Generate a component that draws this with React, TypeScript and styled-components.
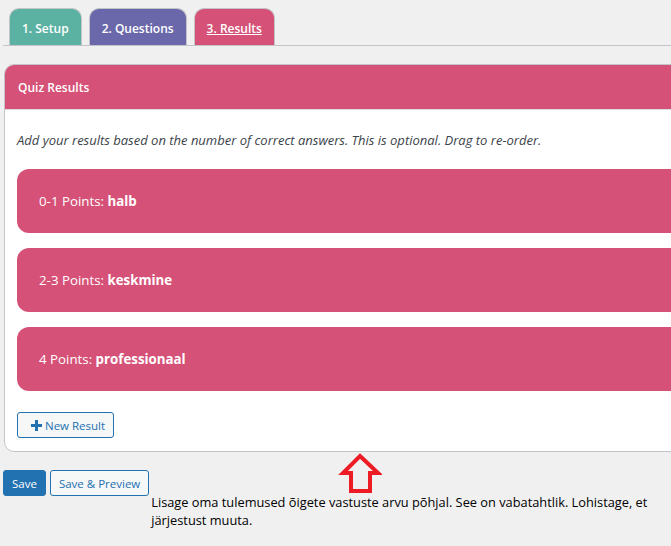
import React from "react";
import styled, { createGlobalStyle } from "styled-components";

const GlobalStyle = createGlobalStyle`
  html, body { margin: 0; padding: 0; background: #f0f0f1; overflow: hidden; }
  body { font-family: "Open Sans", "Noto Sans", sans-serif; font-size: 13px; color: #1d2327; }
  * { box-sizing: border-box; }
`;

const Page = styled.div`
  position: relative;
  width: 671px;
  height: 546px;
  padding: 8px 0 0 3px;
  overflow: hidden;
`;

const TabBar = styled.div`
  display: flex;
  gap: 7px;
  padding-left: 6px;
  border-bottom: 1px solid #c3c4c7;
  width: 740px;
`;

const Tab = styled.div<{ $bg: string; $active?: boolean }>`
  height: 37px;
  padding: 11px 12px 0;
  background: ${(p) => p.$bg};
  color: #fff;
  font-weight: 600;
  font-size: 12px;
  border: 1px solid #c3c4c7;
  border-bottom: none;
  border-radius: 10px 10px 0 0;
  text-decoration: ${(p) => (p.$active ? "underline" : "none")};
  white-space: nowrap;
`;

const Panel = styled.div`
  margin: 18px 0 0 1px;
  width: 740px;
  background: #fff;
  border: 1px solid #c3c4c7;
  border-radius: 10px;
  overflow: hidden;
`;

const PanelHeader = styled.div`
  height: 45px;
  background: #d65177;
  color: #fff;
  font-weight: 600;
  font-size: 12px;
  display: flex;
  align-items: center;
  padding: 0 13px;
  border-bottom: 1px solid #dcdcde;
`;

const PanelBody = styled.div`
  padding: 21px 12px 13px;
`;

const Description = styled.p`
  margin: 0 0 20px;
  font-style: italic;
  font-size: 13px;
  line-height: 18px;
  color: #3c434a;
`;

const ResultList = styled.div`
  display: flex;
  flex-direction: column;
  gap: 15px;
`;

const ResultCard = styled.div`
  height: 64px;
  background: #d65177;
  border-radius: 12px;
  color: #fff;
  font-size: 13.3px;
  display: flex;
  align-items: center;
  padding: 0 22px;
  b { font-weight: 700; }
`;

const NewResultButton = styled.button`
  margin-top: 21px;
  height: 26px;
  display: inline-flex;
  align-items: center;
  gap: 3px;
  padding: 0 8px 0 13px;
  background: #f6f7f7;
  border: 1px solid #2271b1;
  border-radius: 3px;
  color: #2271b1;
  font-family: inherit;
  font-size: 11.5px;
`;

const Footer = styled.div`
  display: flex;
  align-items: flex-start;
  gap: 4px;
  margin-top: 18px;
`;

const PrimaryButton = styled.button`
  flex-shrink: 0;
  white-space: nowrap;
  height: 26px;
  padding: 0 8px;
  background: #2271b1;
  border: 1px solid #2271b1;
  border-radius: 3px;
  color: #fff;
  font-family: inherit;
  font-size: 11.5px;
`;

const SecondaryButton = styled(PrimaryButton)`
  background: #f6f7f7;
  color: #2271b1;
`;

const Note = styled.div`
  flex-shrink: 0;
  width: 505px;
  margin-top: 23px;
  margin-left: -2px;
  font-size: 12.8px;
  line-height: 18px;
  color: #000;
`;

const ArrowMark = styled.svg`
  position: absolute;
  left: 338px;
  top: 452px;
`;

const PlusIcon = () => (
  <svg width="11" height="11" viewBox="0 0 11 11">
    <path d="M5.5 0v11M0 5.5h11" stroke="#2271b1" strokeWidth="3" />
  </svg>
);

const results = [
  { range: "0-1 Points:", name: "halb" },
  { range: "2-3 Points:", name: "keskmine" },
  { range: "4 Points:", name: "professionaal" },
];

export default function App() {
  return (
    <>
      <GlobalStyle />
      <Page>
        <TabBar>
          <Tab $bg="#5bb2a2">1. Setup</Tab>
          <Tab $bg="#6a68aa">2. Questions</Tab>
          <Tab $bg="#d65177" $active>3. Results</Tab>
        </TabBar>
        <Panel>
          <PanelHeader>Quiz Results</PanelHeader>
          <PanelBody>
            <Description>
              Add your results based on the number of correct answers. This is optional. Drag to re-order.
            </Description>
            <ResultList>
              {results.map((r) => (
                <ResultCard key={r.name}>
                  {r.range}&nbsp;<b>{r.name}</b>
                </ResultCard>
              ))}
            </ResultList>
            <NewResultButton>
              <PlusIcon />
              New Result
            </NewResultButton>
          </PanelBody>
        </Panel>
        <Footer>
          <PrimaryButton>Save</PrimaryButton>
          <SecondaryButton>Save &amp; Preview</SecondaryButton>
          <Note>
            Lisage oma tulemused õigete vastuste arvu põhjal. See on vabatahtlik. Lohistage, et järjestust muuta.
          </Note>
        </Footer>
        <ArrowMark width="44" height="44" viewBox="0 0 44 44">
          <polygon
            points="22,4 40,21 32,21 32,39 13,39 13,21 5,21"
            fill="none"
            stroke="#ed1c24"
            strokeWidth="4"
            strokeLinejoin="miter"
          />
        </ArrowMark>
      </Page>
    </>
  );
}
